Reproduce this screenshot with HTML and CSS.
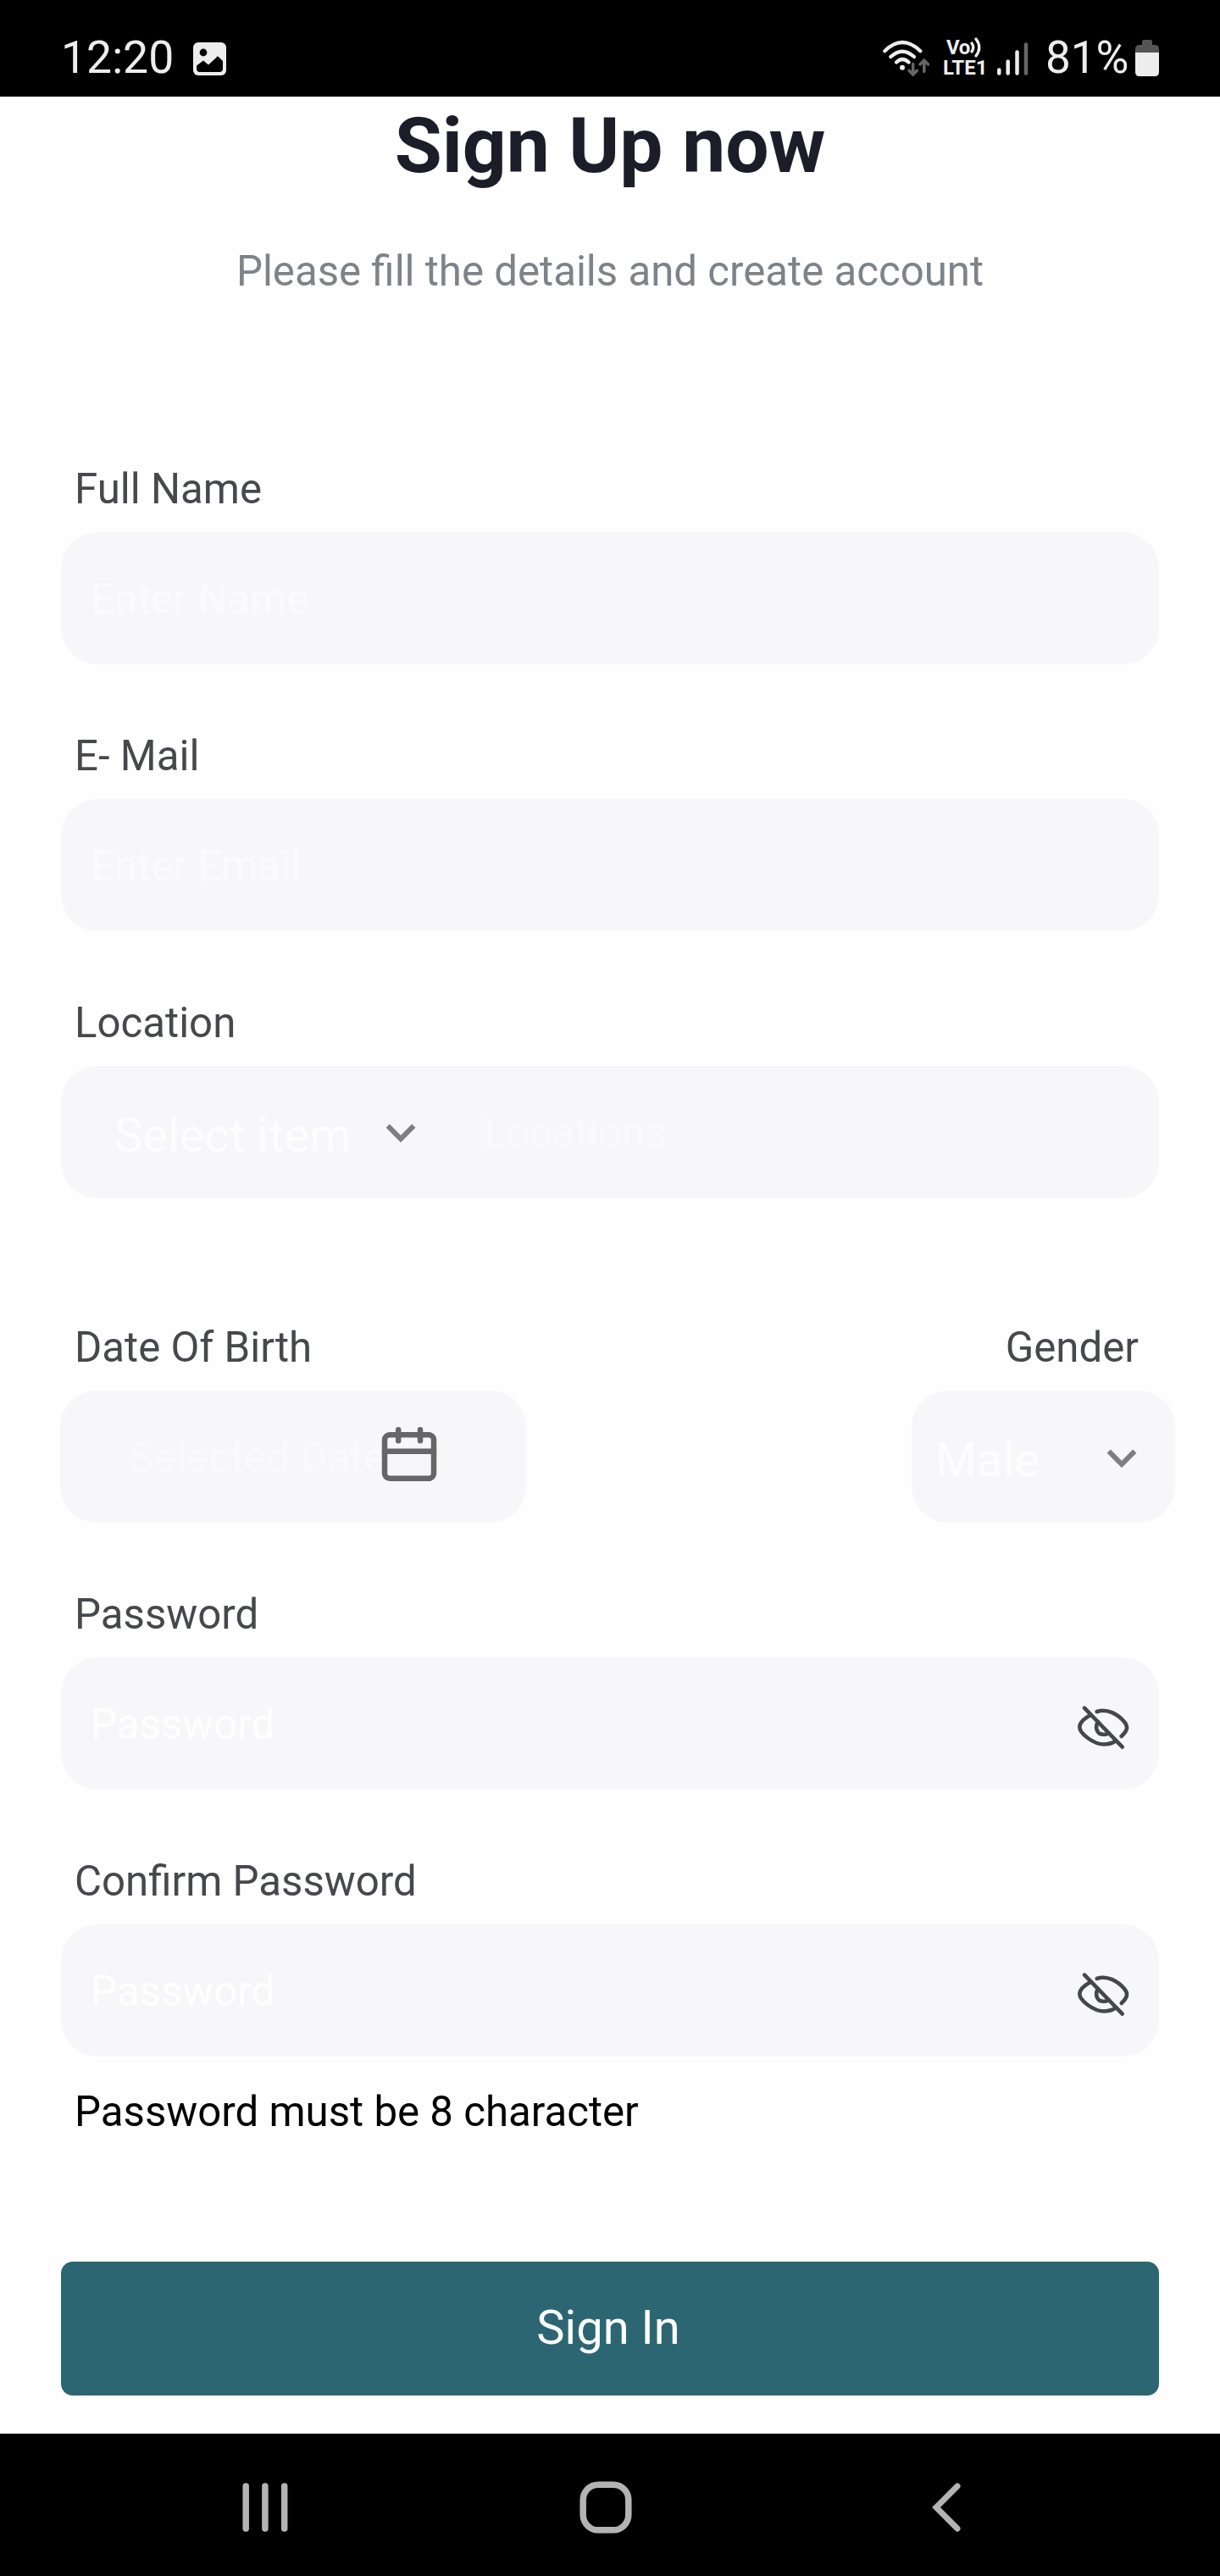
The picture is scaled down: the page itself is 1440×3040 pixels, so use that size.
FILE: index.html
```html
<!DOCTYPE html>
<html lang="en">
<head>
<meta charset="utf-8">
<title>Sign Up now</title>
<link rel="stylesheet" href="styles.css">
</head>
<body>
<svg width="0" height="0" class="sprite" aria-hidden="true">
  <symbol id="eye-off" viewBox="0 0 70 66">
    <g fill="none" stroke="#45474b" stroke-width="4.6" stroke-linecap="round" stroke-linejoin="round">
      <path d="M15 10.7 59.7 56.7"/>
      <path d="M29.7 15C42 10.5 55 18.500 62.500 27.500C67 33 65.500 37.500 58.700 44"/>
      <path d="M21.700 19.300C16 22.500 9.300 27.500 9.300 33C9.300 41 26 53.500 38 53.500C43 53.500 47 52.500 51 50"/>
      <path d="M31 27C27.500 32.500 28.500 42 38 42C40.500 42 42 41.300 43.500 40"/>
    </g>
  </symbol>
  <symbol id="chevron" viewBox="0 0 36 24">
    <path d="M2.700 2.700 18 18 33.300 2.700" fill="none" stroke="#7f7f7f" stroke-width="6"/>
  </symbol>
</svg>
<header class="status">
  <div class="status-left">
    <span class="status-text">12:20</span>
    <svg class="picture" width="39" height="39" viewBox="0 0 39 39">
      <rect width="39" height="39" rx="6" fill="#ededed"/>
      <circle cx="12" cy="12" r="4.400" fill="#000"/>
      <path d="M4 27.500 12 21.500 18 26.500 29 16.300 35 22V31Q35 35 31 35H8Q4 35 4 31Z" fill="#000"/>
    </svg>
  </div>
  <div class="status-right">
    <svg class="wifi" width="56" height="44" viewBox="0 0 56 44">
      <g fill="none" stroke="#ededed" stroke-width="4.300" stroke-linecap="round">
        <path d="M3.300 13.200Q24 -7 45.300 13.200"/>
        <path d="M10.300 20Q24 7.300 38 20"/>
        <path d="M17 26.500Q24 19.500 31.600 26.500"/>
      </g>
      <circle cx="24" cy="32.700" r="3" fill="#ededed"/>
      <g fill="none" stroke="#666" stroke-width="3.500" stroke-linecap="round">
        <path d="M36.700 28.500V40.500M32 36.300 36.700 41 41.400 36.300"/>
        <path d="M49.800 37.500V25M45 29 49.800 24.200 54.600 29"/>
      </g>
    </svg>
    <div class="volte">
      <span class="volte-top">Vo<svg width="13" height="24" viewBox="0 0 13 24"><path d="M2 7Q5.500 12 2 17M7 2Q14.500 12 7 22" fill="none" stroke="#ededed" stroke-width="3.300" stroke-linecap="round"/></svg></span>
      <span>LTE1</span>
    </div>
    <svg class="signal" width="37" height="42" viewBox="0 0 37 42">
      <g stroke-width="4.500" stroke-linecap="round" stroke="#ededed">
        <path d="M2.300 34.500V38.500M12.700 24.500V38.500M23.500 13.500V38.500"/>
        <path d="M34 4.500V38.500" stroke="#666"/>
      </g>
    </svg>
    <span class="status-text percent">81%</span>
    <svg class="battery" width="28" height="43" viewBox="0 0 28 43">
      <path d="M8 6V2Q8 0 10 0H18Q20 0 20 2V6H23Q28 6 28 11V16H0V11Q0 6 5 6Z" fill="#555"/>
      <path d="M0 15H28V38Q28 43 23 43H5Q0 43 0 38Z" fill="#ededed"/>
    </svg>
  </div>
</header>
<main class="content">
  <h1 class="title">Sign Up now</h1>
  <p class="subtitle">Please fill the details and create account</p>
  <form class="form">
    <div class="group">
      <label class="label">Full Name</label>
      <div class="field"><span class="hint">Enter Name</span></div>
    </div>
    <div class="group">
      <label class="label">E- Mail</label>
      <div class="field"><span class="hint">Enter Email</span></div>
    </div>
    <div class="group group-location">
      <label class="label">Location</label>
      <div class="field field-location">
        <span class="selected">Select item</span>
        <svg class="chevron" width="36" height="24"><use href="#chevron"/></svg>
        <span class="hint hint-faint">Locations</span>
      </div>
    </div>
    <div class="split">
      <div class="group">
        <label class="label">Date Of Birth</label>
        <div class="field field-date">
          <span class="hint hint-faint">Selected Date</span>
          <svg class="calendar" width="66" height="66" viewBox="0 0 66 66">
            <g fill="none" stroke="#666" stroke-width="6.500" stroke-linecap="round">
              <rect x="4" y="10.200" width="58" height="51.600" rx="6"/>
              <path d="M4 29.700H62M20.200 4.200V17.200M46 4.200V17.200"/>
            </g>
          </svg>
        </div>
      </div>
      <div class="group group-gender">
        <label class="label">Gender</label>
        <div class="field field-gender">
          <span class="selected">Male</span>
          <svg class="chevron" width="36" height="24"><use href="#chevron"/></svg>
        </div>
      </div>
    </div>
    <div class="group">
      <label class="label">Password</label>
      <div class="field field-password">
        <span class="hint hint-strong">Password</span>
        <svg class="eye" width="70" height="66"><use href="#eye-off"/></svg>
      </div>
    </div>
    <div class="group">
      <label class="label">Confirm Password</label>
      <div class="field field-password">
        <span class="hint hint-strong">Password</span>
        <svg class="eye" width="70" height="66"><use href="#eye-off"/></svg>
      </div>
    </div>
    <p class="note">Password must be 8 character</p>
    <button class="submit" type="button">Sign In</button>
  </form>
</main>
<nav class="navbar">
  <svg width="54" height="60" viewBox="0 0 54 60"><path d="M4.200 5V55M26.900 5V55M49.700 5V55" stroke="#b3b3b3" stroke-width="7.500" stroke-linecap="round"/></svg>
  <svg class="home" width="62" height="62" viewBox="0 0 62 62"><rect x="4.200" y="4.200" width="53.600" height="53.600" rx="18" fill="none" stroke="#b3b3b3" stroke-width="7.500"/></svg>
  <svg width="36" height="60" viewBox="0 0 36 60"><path d="M31 5 6 30 31 55" fill="none" stroke="#b3b3b3" stroke-width="7" stroke-linecap="round"/></svg>
</nav>
</body>
</html>
```
FILE: styles.css
```css
* {
  box-sizing: border-box;
}

body {
  margin: 0;
  width: 1440px;
  height: 3040px;
  display: flex;
  flex-direction: column;
  background: #fefefe;
  font-family: Roboto, "Liberation Sans", sans-serif;
}

svg {
  display: block;
  flex: none;
}

.sprite {
  position: absolute;
}

/* Status bar */

.status {
  height: 114px;
  flex: none;
  padding: 36px 72px 0;
  display: flex;
  justify-content: space-between;
  background: #000;
  color: #ededed;
}

.status-left,
.status-right {
  display: flex;
  align-items: flex-start;
}

.status-text {
  font-size: 53.5px;
  line-height: 64px;
}

.picture {
  margin: 14px 0 0 23px;
}

.wifi {
  margin: 11px 16px 0 0;
}

.volte {
  width: 52px;
  height: 60px;
  padding-top: 8px;
  display: flex;
  flex-direction: column;
  font-size: 24px;
  font-weight: 700;
  line-height: 24px;
}

.volte-top {
  display: flex;
  padding-left: 4px;
  letter-spacing: -0.5px;
}

.signal {
  margin: 12px 0 0 12px;
}

.percent {
  width: 98px;
  margin-left: 20px;
  font-size: 53px;
}

.battery {
  margin: 11px 0 0 8px;
}

/* Sign-up form */

.content {
  flex: none;
  height: 2758px;
  padding: 3px 72px 0;
}

.title {
  margin: 0;
  color: #1b1e28;
  font-size: 91px;
  font-weight: 700;
  line-height: 110px;
  text-align: center;
}

.subtitle {
  margin: 64px 0 0;
  color: #7d8389;
  font-size: 49.2px;
  line-height: 58px;
  text-align: center;
}

.form {
  padding-top: 198px;
}

.group {
  display: flex;
  flex-direction: column;
  margin-bottom: 78px;
}

.label {
  padding: 1px 0 0 16px;
  margin-bottom: 22px;
  color: #47484c;
  font-size: 49.2px;
  line-height: 58px;
}

.field {
  height: 156px;
  padding-left: 35px;
  display: flex;
  align-items: flex-start;
  border-radius: 43px;
  background: #f7f7f9;
}

.hint {
  padding-top: 50px;
  color: #fbfbfc;
  font-size: 49.2px;
  line-height: 58px;
  white-space: nowrap;
}

.hint-faint {
  color: #fafafb;
}

.hint-strong {
  color: #fefefe;
}

.selected {
  padding-top: 49px;
  color: #fdfdfe;
  font-size: 56.2px;
  line-height: 66px;
}

.group-location {
  margin-bottom: 147px;
}

.field-location {
  padding-left: 63px;
}

.field-location .selected {
  width: 320px;
}

.field-location .chevron {
  margin: 68px 80px 0 0;
}

.split {
  display: flex;
  justify-content: space-between;
  margin: -1px -19px 0 -1px;
}

.split .label {
  padding-left: 17px;
}

.field-date {
  width: 550px;
  padding-left: 82px;
}

.field-date .hint {
  width: 297px;
}

.calendar {
  margin-top: 42px;
}

.group-gender .label {
  padding: 1px 43px 0 0;
  text-align: right;
}

.field-gender {
  width: 311px;
  padding-left: 28px;
}

.field-gender .selected {
  width: 202px;
}

.field-gender .chevron {
  margin-top: 69px;
}

.field-password {
  padding-right: 33px;
  justify-content: space-between;
}

.eye {
  margin-top: 49px;
}

.note {
  margin: -42px 0 0;
  padding-left: 16px;
  color: #000;
  font-size: 49.2px;
  line-height: 58px;
}

.submit {
  display: block;
  width: 100%;
  height: 158px;
  margin-top: 148px;
  padding: 0 4px 3px 0;
  border: 0;
  border-radius: 14px;
  background: #2c6672;
  color: #fff;
  font-family: inherit;
  font-size: 56px;
  line-height: 66px;
}

/* System navigation */

.navbar {
  height: 168px;
  flex: none;
  padding: 6px 305px 0 286px;
  display: flex;
  align-items: center;
  justify-content: space-between;
  background: #000;
}

.home {
  margin-right: 9px;
}
```
